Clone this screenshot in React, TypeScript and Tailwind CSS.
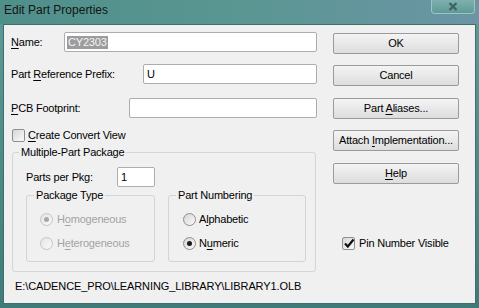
import React from "react";

const font = { fontFamily: '"Liberation Sans", Arial, sans-serif' };

const Mn: React.FC<{ children: React.ReactNode }> = ({ children }) => (
  <span className="underline decoration-1 underline-offset-[2px]">{children}</span>
);

const CheckBox: React.FC<{ checked?: boolean }> = ({ checked }) => (
  <span className="relative flex h-[13px] w-[13px] shrink-0 items-center justify-center rounded-[2px] border border-[#8e8f8f] bg-gradient-to-br from-[#d6d6d6] to-[#fbfbfb]">
    {checked && (
      <svg width="12" height="12" viewBox="0 0 12 12" className="absolute left-[0px] top-[-1px]">
        <path d="M2 6.5 L4.8 9.5 L10.5 2.5" fill="none" stroke="#111" strokeWidth="2.2" />
      </svg>
    )}
  </span>
);

const Radio: React.FC<{ checked?: boolean; disabled?: boolean }> = ({ checked, disabled }) => (
  <span
    className={
      disabled
        ? "flex h-[13px] w-[13px] shrink-0 items-center justify-center rounded-full border border-[#c4c4c4] bg-gradient-to-br from-[#e4e4e4] to-[#fafafa]"
        : "flex h-[13px] w-[13px] shrink-0 items-center justify-center rounded-full border border-[#8e8f8f] bg-gradient-to-br from-[#d4d4d4] to-[#fbfbfb]"
    }
  >
    {checked && (
      <span className={disabled ? "h-[5px] w-[5px] rounded-full bg-[#a8a8a8]" : "h-[5px] w-[5px] rounded-full bg-[#1c1c1c]"} />
    )}
  </span>
);

const Btn: React.FC<{ children: React.ReactNode; className?: string }> = ({ children, className }) => (
  <div
    className={
      "flex h-[21px] w-[126px] items-center justify-center rounded-[2px] border border-[#9a9a9a] bg-gradient-to-b from-[#f4f4f4] to-[#dddddd] text-[11px] text-black " +
      (className ?? "")
    }
  >
    {children}
  </div>
);

const Input: React.FC<{ className?: string; children?: React.ReactNode }> = ({ className, children }) => (
  <div className={"flex h-[20px] items-center rounded-[2px] border border-[#abadb3] bg-white pl-[2px] text-[11px] " + (className ?? "")}>
    {children}
  </div>
);

export default function App() {
  return (
    <div className="flex h-[308px] w-[479px] flex-col bg-gradient-to-b from-[#5f9b97] to-[#3f7c79] tracking-[-0.2px]" style={font}>
      {/* title bar */}
      <div className="flex h-[24px] shrink-0 items-start justify-between bg-gradient-to-r from-[#4f8f8a] via-[#5a9692] to-[#6b95a5]">
        <span className="pl-[4px] pt-[3px] text-[12px] leading-[15px] tracking-normal text-[#141414]">Edit Part Properties</span>
        <div className="mr-[4px] flex h-[14px] w-[44px] items-center justify-center rounded-b-[4px] border border-t-0 border-[#9fc3c3] bg-gradient-to-b from-[#7fb0ae] to-[#5e9a97]">
          <svg width="10" height="9" viewBox="0 0 10 9">
            <path d="M1.5 1 L8.5 8 M8.5 1 L1.5 8" stroke="#3e6264" strokeWidth="2.2" />
          </svg>
        </div>
      </div>

      {/* client area */}
      <div className="mx-[3px] flex h-[280px] border border-[#3d6f6e] bg-[#f0f0f0] text-[11px] leading-[13px] text-black">
        {/* left column */}
        <div className="ml-[7px] flex w-[306px] flex-col pt-[7px]">
          <div className="flex h-[20px] items-center">
            <span className="w-[53px]">
              <Mn>N</Mn>ame:
            </span>
            <Input className="flex-1">
              <span className="bg-[#9c9c9c] px-[1px] text-[#f4f4f4]">CY2303</span>
            </Input>
          </div>

          <div className="mt-[12px] flex h-[20px] items-center">
            <span className="w-[132px]">
              Part <Mn>R</Mn>eference Prefix:
            </span>
            <Input className="flex-1 pl-[3px]">U</Input>
          </div>

          <div className="mt-[14px] flex h-[20px] items-center">
            <span className="w-[118px]">
              <Mn>P</Mn>CB Footprint:
            </span>
            <Input className="flex-1" />
          </div>

          <div className="ml-[1px] mt-[10px] flex h-[14px] items-center gap-[3px]">
            <CheckBox />
            <span>
              <Mn>C</Mn>reate Convert View
            </span>
          </div>

          {/* Multiple-Part Package */}
          <div className="relative ml-[1px] mt-[10px] h-[120px] w-[304px] rounded-[3px] border border-[#cfd5d8]">
            <span className="absolute left-[6px] top-[-7px] bg-[#f0f0f0] px-[2px]">Multiple-Part Package</span>
            <div className="flex h-[20px] items-center pl-[13px] pt-0 mt-[14px]">
              <span className="w-[91px]">Parts per Pkg:</span>
              <Input className="w-[38px] pl-[3px]">1</Input>
            </div>
            <div className="mt-[8px] flex gap-[13px] pl-[13px]">
              <div className="relative h-[67px] w-[129px] rounded-[3px] border border-[#cfd5d8]">
                <span className="absolute left-[7px] top-[-7px] bg-[#f0f0f0] px-[2px]">Package Type</span>
                <div className="flex flex-col gap-[11px] pl-[13px] pt-[17px] text-[#a3a3a3]">
                  <div className="flex h-[13px] items-center gap-[4px]">
                    <Radio checked disabled />
                    <span>
                      H<Mn>o</Mn>mogeneous
                    </span>
                  </div>
                  <div className="flex h-[13px] items-center gap-[4px]">
                    <Radio disabled />
                    <span>
                      H<Mn>e</Mn>terogeneous
                    </span>
                  </div>
                </div>
              </div>
              <div className="relative h-[67px] w-[138px] rounded-[3px] border border-[#cfd5d8]">
                <span className="absolute left-[7px] top-[-7px] bg-[#f0f0f0] px-[2px]">Part Numbering</span>
                <div className="flex flex-col gap-[11px] pl-[14px] pt-[17px]">
                  <div className="flex h-[13px] items-center gap-[3px]">
                    <Radio />
                    <span>
                      A<Mn>l</Mn>phabetic
                    </span>
                  </div>
                  <div className="flex h-[13px] items-center gap-[3px]">
                    <Radio checked />
                    <span>
                      N<Mn>u</Mn>meric
                    </span>
                  </div>
                </div>
              </div>
            </div>
          </div>

          <div className="ml-[4px] mt-[8px] tracking-[-0.1px]">E:\CADENCE_PRO\LEARNING_LIBRARY\LIBRARY1.OLB</div>
        </div>

        {/* right column */}
        <div className="ml-[16px] flex flex-col pt-[8px]">
          <Btn>OK</Btn>
          <Btn className="mt-[11px]">Cancel</Btn>
          <Btn className="mt-[12px]">
            <span>
              Part <Mn>A</Mn>liases...
            </span>
          </Btn>
          <Btn className="mt-[11px]">
            <span>
              Attach <Mn>I</Mn>mplementation...
            </span>
          </Btn>
          <Btn className="mt-[12px]">
            <span>
              <Mn>H</Mn>elp
            </span>
          </Btn>
          <div className="ml-[9px] mt-[53px] flex h-[13px] items-center gap-[4px]">
            <CheckBox checked />
            <span>Pin Number Visible</span>
          </div>
        </div>
      </div>
    </div>
  );
}
